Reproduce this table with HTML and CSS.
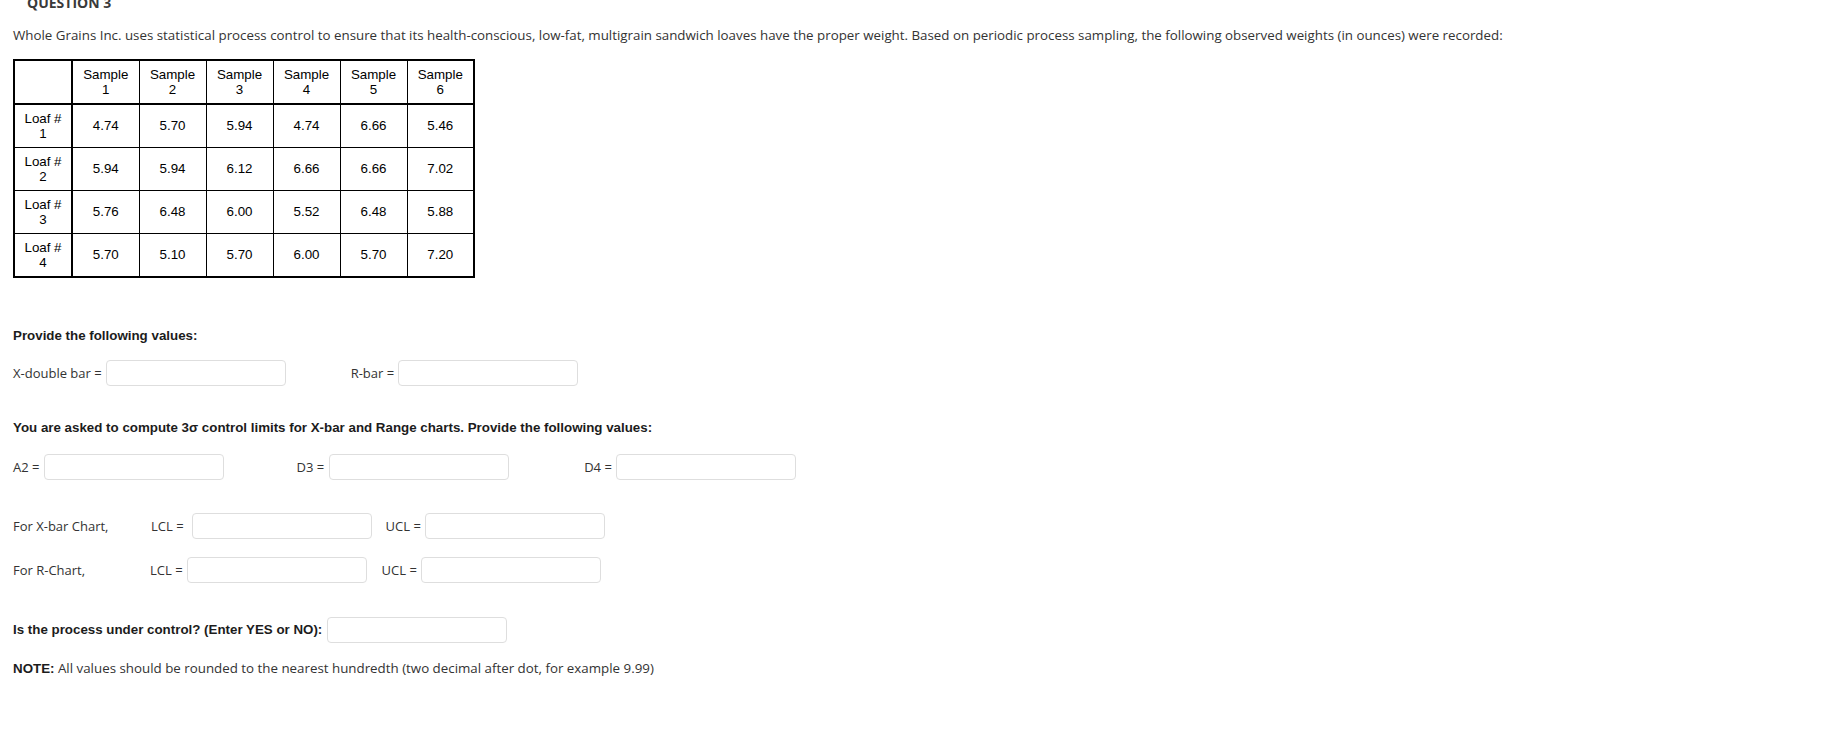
FILE: index.html
```html
<!DOCTYPE html>
<html lang="en">
<head>
<meta charset="utf-8">
<title>Question 3</title>
<link rel="stylesheet" href="styles.css">
</head>
<body>
<div class="page">
  <div class="qtitle">QUESTION 3</div>
  <p class="intro">Whole Grains Inc. uses statistical process control to ensure that its health-conscious, low-fat, multigrain sandwich loaves have the proper weight. Based on periodic process sampling, the following observed weights (in ounces) were recorded:</p>

  <table class="data">
    <colgroup>
      <col class="c-first">
      <col class="c-data"><col class="c-data"><col class="c-data"><col class="c-data"><col class="c-data"><col class="c-data">
    </colgroup>
    <tr class="head">
      <td class="first"></td>
      <td>Sample<br>1</td>
      <td>Sample<br>2</td>
      <td>Sample<br>3</td>
      <td>Sample<br>4</td>
      <td>Sample<br>5</td>
      <td>Sample<br>6</td>
    </tr>
    <tr>
      <td class="first">Loaf #<br>1</td>
      <td>4.74</td><td>5.70</td><td>5.94</td><td>4.74</td><td>6.66</td><td>5.46</td>
    </tr>
    <tr>
      <td class="first">Loaf #<br>2</td>
      <td>5.94</td><td>5.94</td><td>6.12</td><td>6.66</td><td>6.66</td><td>7.02</td>
    </tr>
    <tr>
      <td class="first">Loaf #<br>3</td>
      <td>5.76</td><td>6.48</td><td>6.00</td><td>5.52</td><td>6.48</td><td>5.88</td>
    </tr>
    <tr>
      <td class="first">Loaf #<br>4</td>
      <td>5.70</td><td>5.10</td><td>5.70</td><td>6.00</td><td>5.70</td><td>7.20</td>
    </tr>
  </table>

  <div class="heading h-provide">Provide the following values:</div>

  <div class="row row-means">
    <label class="field"><span class="lbl">X-double bar =</span><input class="box" type="text"></label>
    <label class="field"><span class="lbl">R-bar =</span><input class="box" type="text"></label>
  </div>

  <div class="heading h-asked">You are asked to compute 3σ control limits for X-bar and Range charts. Provide the following values:</div>

  <div class="row row-factors">
    <label class="field f5"><span class="lbl">A2 =</span><input class="box" type="text"></label>
    <label class="field f5 d3"><span class="lbl">D3 =</span><input class="box" type="text"></label>
    <label class="field d4"><span class="lbl">D4 =</span><input class="box" type="text"></label>
  </div>

  <div class="row row-chart row-x">
    <span class="lbl chart-name">For X-bar Chart,</span>
    <label class="field lcl"><span class="lbl">LCL =</span><input class="box" type="text"></label>
    <label class="field"><span class="lbl">UCL =</span><input class="box" type="text"></label>
  </div>

  <div class="row row-chart row-r">
    <span class="lbl chart-name">For R-Chart,</span>
    <label class="field"><span class="lbl">LCL =</span><input class="box" type="text"></label>
    <label class="field"><span class="lbl">UCL =</span><input class="box" type="text"></label>
  </div>

  <div class="row row-control">
    <label class="field f5"><span class="heading-inline">Is the process under control? (Enter YES or NO):</span><input class="box" type="text"></label>
  </div>

  <p class="note"><strong>NOTE:</strong> All values should be rounded to the nearest hundredth (two decimal after dot, for example 9.99)</p>
</div>
</body>
</html>
```

FILE: styles.css
```css
html, body {
  margin: 0;
  padding: 0;
  background: #ffffff;
}

.page {
  padding: 0 13px;
  width: 1800px;
}

.qtitle {
  margin: -6px 0 0 14px;
  font-family: "Open Sans", "DejaVu Sans", sans-serif;
  font-weight: 700;
  font-size: 14px;
  line-height: 18px;
  color: #3a3a3a;
}

.intro {
  margin: 14px 0 0 0;
  font-family: "Open Sans", "DejaVu Sans", sans-serif;
  font-size: 13.33px;
  line-height: 18px;
  color: #333333;
  white-space: nowrap;
}

.data {
  margin-top: 15px;
  border-collapse: collapse;
  table-layout: fixed;
  width: 460px;
  border: 2px solid #000;
  font-family: "Liberation Sans", Arial, sans-serif;
  font-size: 13.33px;
  color: #000;
}

.c-first { width: 58px; }
.c-data { width: 67px; }

.data td {
  border: 1px solid #000;
  height: 42px;
  padding: 0 2px;
  text-align: center;
  vertical-align: middle;
  line-height: 15.5px;
}

.data td.first {
  border-right: 2px solid #000;
}

.data tr.head td {
  border-bottom: 2px solid #000;
}

.heading,
.heading-inline,
.note strong {
  font-family: "Liberation Sans", Arial, sans-serif;
  font-size: 13.33px;
  line-height: 16px;
  font-weight: 700;
  color: #1c1c1c;
  white-space: nowrap;
}

.h-provide { margin-top: 50px; }
.h-asked { margin-top: 34px; }

.row {
  display: flex;
  align-items: center;
  height: 26px;
}

.row-means { margin-top: 16px; gap: 65px; }
.row-factors { margin-top: 18px; gap: 72px; }
.row-factors .d4 { margin-left: 3px; }
.row-x { margin-top: 33px; }
.row-r { margin-top: 18px; }
.row-control { margin-top: 34px; }

.field {
  display: flex;
  align-items: center;
  gap: 4px;
}

.field.f5 { gap: 5px; }

.lbl {
  font-family: "Open Sans", "DejaVu Sans", sans-serif;
  font-size: 13px;
  line-height: 16px;
  color: #333333;
  white-space: nowrap;
}

.chart-name {
  width: 138px;
  flex: none;
}

.row-x .lcl { gap: 8px; }
.row-x { gap: 14px; }
.row-x .chart-name { margin-right: -14px; }

.row-r { gap: 15px; }
.row-r .chart-name { width: 137px; margin-right: -15px; }

.box {
  box-sizing: border-box;
  width: 180px;
  height: 26px;
  margin: 0;
  padding: 0 6px;
  border: 1px solid #dedede;
  border-radius: 4px;
  background: #fff;
  font: inherit;
  outline: none;
}

.note {
  margin: 17px 0 0 0;
  font-family: "Open Sans", "DejaVu Sans", sans-serif;
  font-size: 13.33px;
  line-height: 16px;
  color: #333333;
  white-space: nowrap;
}
```
